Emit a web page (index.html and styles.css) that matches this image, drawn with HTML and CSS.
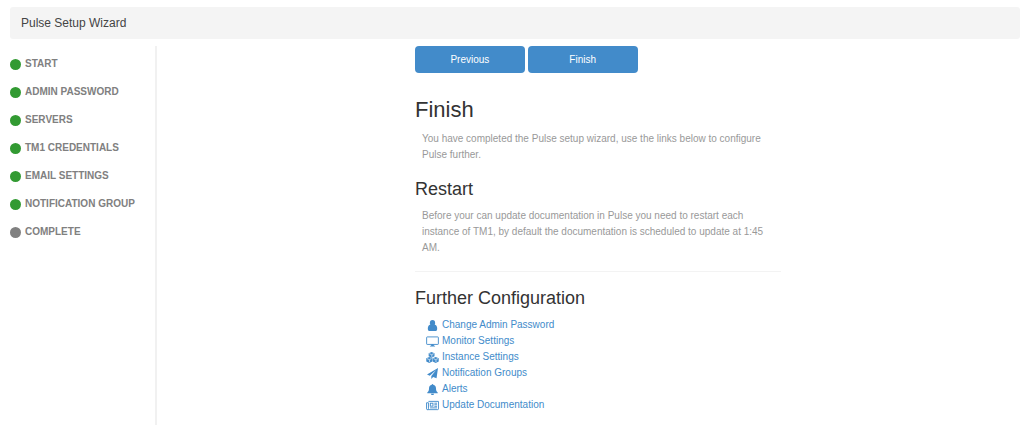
FILE: index.html
```html
<!DOCTYPE html>
<html lang="en">
<head>
<meta charset="utf-8">
<meta name="viewport" content="width=device-width, initial-scale=1">
<title>Pulse Setup Wizard</title>
<link rel="stylesheet" href="styles.css">
</head>
<body>
<header class="title-bar">Pulse Setup Wizard</header>
<div class="wizard">
  <nav class="steps" aria-label="Setup steps">
    <ol class="step-list">
      <li class="step done">START</li>
      <li class="step done">ADMIN PASSWORD</li>
      <li class="step done">SERVERS</li>
      <li class="step done">TM1 CREDENTIALS</li>
      <li class="step done">EMAIL SETTINGS</li>
      <li class="step done">NOTIFICATION GROUP</li>
      <li class="step">COMPLETE</li>
    </ol>
  </nav>
  <main class="main">
    <div class="content">
      <div class="actions">
        <button class="btn" type="button">Previous</button>
        <button class="btn" type="button">Finish</button>
      </div>
      <h1 class="heading">Finish</h1>
      <p class="text">You have completed the Pulse setup wizard, use the links below to configure Pulse further.</p>
      <h2 class="subheading">Restart</h2>
      <p class="text">Before your can update documentation in Pulse you need to restart each instance of TM1, by default the documentation is scheduled to update at 1:45 AM.</p>
      <hr class="rule">
      <h2 class="subheading">Further Configuration</h2>
      <ul class="links">
        <li><a class="link" href="#password">
          <svg class="icon" viewBox="0 0 14 12" aria-hidden="true"><ellipse cx="7" cy="3.200" rx="2.900" ry="3.200"/><path d="M4.200 5.200C2.500 5.500 1.900 7.500 1.900 9.500c0 1.500.8 2.500 2 2.500h6.200c1.200 0 2-1 2-2.500 0-2-.6-4-2.300-4.300z"/></svg>
          Change Admin Password</a></li>
        <li><a class="link" href="#monitor">
          <svg class="icon" viewBox="0 0 14 12" aria-hidden="true"><rect class="stroke" x=".6" y="1" width="12.800" height="8.200" rx=".6"/><path d="M5.800 9h2.400l.4 1.500h1.200v1H4.200v-1h1.200z"/></svg>
          Monitor Settings</a></li>
        <li><a class="link" href="#instance">
          <svg class="icon" viewBox="0 0 14 12" aria-hidden="true"><path d="M6 0l3.200 1.300v3.400L6 6.200 2.800 4.700V1.300zM3.500 5.400l3.300 1.300v3.600l-3.300 1.600-3.300-1.600V6.700zM10.500 5.400l3.300 1.300v3.600l-3.300 1.600-3.300-1.600V6.700z"/><path class="cut" d="M3.500 1.800L6 2.900l2.500-1.100M6.300 3.200v2.200M1 7.200l2.500 1.100L6 7.200M3.800 8.700v2.400M8 7.200l2.500 1.100L13 7.200M10.800 8.700v2.400"/></svg>
          Instance Settings</a></li>
        <li><a class="link" href="#groups">
          <svg class="icon" viewBox="0 0 14 12" aria-hidden="true"><path d="M13 0L1 7l3 1.500 7-6.300-5.300 6.600V12l2-2.200 3.700 1.500z"/></svg>
          Notification Groups</a></li>
        <li><a class="link" href="#alerts">
          <svg class="icon" viewBox="0 0 14 12" aria-hidden="true"><path d="M7 0c.5 0 .8.3.8.8 2 .4 3 1.800 3 3.700 0 2.500.7 3.700 1.900 4.700v.9H1.300v-.9c1.200-1 1.900-2.200 1.900-4.700 0-1.900 1-3.300 3-3.700 0-.5.3-.8.8-.8zM5.300 10.500h3.400c0 .9-.7 1.500-1.700 1.500s-1.700-.6-1.700-1.500z"/></svg>
          Alerts</a></li>
        <li><a class="link" href="#documentation">
          <svg class="icon" viewBox="0 0 14 12" aria-hidden="true"><path class="stroke" d="M2.600 1.500h10.900v8.200q0 .8-.8.800H1.500q-1 0-1-.8V3h2.100v6.500q0 1-1 1M4.300 8.600h7.600M9 3.500h2.900M9 5.200h2.900M9 6.900h2.900"/><rect class="stroke" x="4.600" y="3.500" width="2.900" height="3.200"/></svg>
          Update Documentation</a></li>
      </ul>
    </div>
  </main>
</div>
</body>
</html>
```
FILE: styles.css
```css
* {
  box-sizing: border-box;
}

body {
  margin: 0;
  padding: 7px 4px 0 10px;
  background: #fff;
  color: #333;
  font: 10px/16px "Liberation Sans", Arial, sans-serif;
}

.title-bar {
  padding: 6px 11px;
  border-radius: 3px;
  background: #f4f4f4;
  color: #444;
  font-size: 12px;
  line-height: 20px;
}

.wizard {
  display: flex;
  margin-top: 7px;
}

.steps {
  flex: none;
  width: 147px;
  padding: 9px 0 184px;
  border-right: 2px solid #f1f1f1;
}

.step-list,
.links {
  margin: 0;
  padding: 0;
  list-style: none;
}

.step-list {
  display: grid;
  gap: 10px;
}

.step {
  display: flex;
  align-items: center;
  gap: 4px;
  color: #808080;
  font-weight: bold;
  line-height: 18px;
}

.step::before {
  content: "";
  width: 11px;
  height: 11px;
  border-radius: 50%;
  background: #808080;
}

.step.done::before {
  background: #329a32;
}

.main {
  flex: 1;
  padding-left: calc(30% - 45px);
}

.content {
  max-width: 366px;
}

.actions {
  display: grid;
  grid-template-columns: 30% 30%;
  gap: 3px;
}

.btn {
  padding: 6px 8px 5px;
  border: 0;
  border-radius: 4px;
  background: #428bca;
  color: #fff;
  font: inherit;
}

.heading,
.subheading {
  margin: 0;
  font-weight: normal;
}

.heading {
  margin-top: 23px;
  font-size: 22px;
  line-height: 28px;
}

.subheading {
  margin-top: 14px;
  font-size: 18px;
  line-height: 24px;
}

.text {
  margin: 7px 0 0;
  padding: 0 7px;
  color: #999;
}

.rule {
  margin: 15px 0 0;
  border: 0;
  border-top: 1px solid #f3f3f3;
}

.links {
  margin-top: 7px;
  padding-left: 11px;
}

.link {
  display: flex;
  align-items: center;
  gap: 3px;
  width: max-content;
  color: #428bca;
  text-decoration: none;
}

.icon {
  width: 13px;
  height: 11px;
  fill: currentColor;
}

.stroke {
  fill: none;
  stroke: currentColor;
}

.cut {
  fill: none;
  stroke: #fff;
  stroke-width: .7;
}
```
